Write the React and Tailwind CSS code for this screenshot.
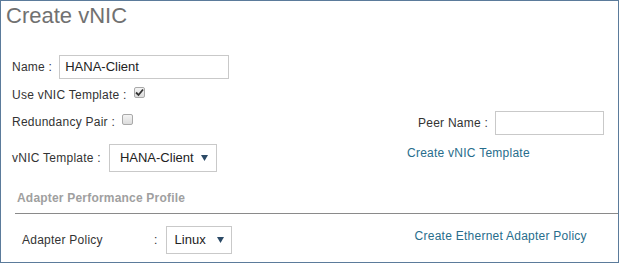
import React from 'react';

const font = { fontFamily: '"Liberation Sans", Arial, sans-serif' };

function Checkbox({ checked }) {
  return (
    <span className="inline-flex h-[11px] w-[11px] items-center justify-center rounded-[2px] border border-[#a9a9a9] bg-gradient-to-b from-[#f4f4f4] to-[#dcdcdc]">
      {checked && (
        <svg width="9" height="9" viewBox="0 0 9 9">
          <path d="M1 4.5 L3.5 7 L8 1.5" stroke="#333" strokeWidth="1.8" fill="none" />
        </svg>
      )}
    </span>
  );
}

function Select({ value, className }) {
  return (
    <div className={`flex items-center justify-between border border-[#c9c9c9] bg-white text-[13px] tracking-normal text-[#222] ${className}`}>
      <span>{value}</span>
      <svg width="7" height="6" viewBox="0 0 7 6">
        <path d="M0 0 H7 L3.5 6 Z" fill="#2b4a66" />
      </svg>
    </div>
  );
}

export default function App() {
  return (
    <div style={font} className="h-[263px] w-[619px] overflow-hidden border border-[#5b7b9b] bg-white text-[12px] tracking-[0.25px] text-[#333]">
      {/* Title */}
      <div className="pl-[5px] pt-[2px] text-[22px] leading-[26px] tracking-normal text-[#717171]">Create vNIC</div>

      {/* Upper form */}
      <div className="mt-[26px] flex">
        <div className="flex w-[406px] flex-col pl-[11px]">
          <div className="flex h-[24px] items-center">
            <span>Name :</span>
            <div className="ml-[7px] flex h-[24px] w-[170px] items-center border border-[#c9c9c9] pl-[5px] text-[13px] tracking-normal text-[#222]">HANA-Client</div>
          </div>
          <div className="mt-[4px] flex h-[24px] items-center">
            <span>Use vNIC Template :</span>
            <span className="ml-[7px] mt-[-4px]"><Checkbox checked /></span>
          </div>
          <div className="mt-[3px] flex h-[24px] items-center">
            <span>Redundancy Pair :</span>
            <span className="ml-[7px] mt-[-3px]"><Checkbox /></span>
          </div>
          <div className="mt-[10px] flex h-[28px] items-center">
            <span>vNIC Template :</span>
            <Select value="HANA-Client" className="ml-[8px] h-[28px] w-[108px] pl-[10px] pr-[8px]" />
          </div>
        </div>
        <div className="flex flex-col pt-[56px]">
          <div className="flex h-[24px] items-center">
            <span className="ml-[11px]">Peer Name :</span>
            <div className="ml-[7px] h-[24px] w-[109px] border border-[#c9c9c9]" />
          </div>
          <a className="mt-[9px] text-[#276d8c]">Create vNIC Template</a>
        </div>
      </div>

      {/* Adapter section */}
      <div className="ml-[14px] mt-[17px] border-b border-[#8a8a8a] pb-[6px] pl-[2px] font-bold tracking-[0.2px] text-[#a0a0a0]">Adapter Performance Profile</div>
      <div className="mt-[12px] flex items-center">
        <span className="ml-[21px] w-[132px]">Adapter Policy</span>
        <span>:</span>
        <Select value="Linux" className="ml-[8px] h-[28px] w-[66px] pl-[8px] pr-[7px]" />
        <a className="ml-[183px] mt-[-9px] text-[#276d8c]">Create Ethernet Adapter Policy</a>
      </div>
    </div>
  );
}
